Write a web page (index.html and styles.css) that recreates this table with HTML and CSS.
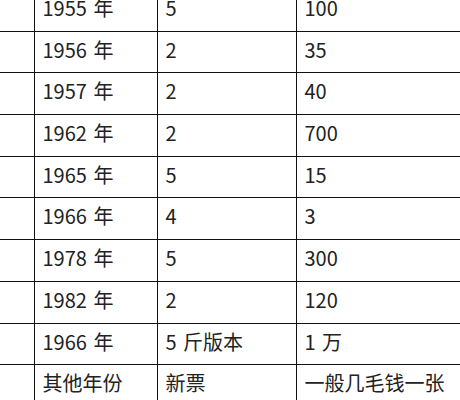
FILE: index.html
```html
<!DOCTYPE html>
<html lang="zh-CN">
<head>
<meta charset="utf-8">
<title>票价表</title>
<link rel="stylesheet" href="styles.css">
</head>
<body>
<table class="price-table">
  <colgroup>
    <col class="c-a">
    <col class="c-b">
    <col class="c-c">
    <col class="c-d">
  </colgroup>
  <tbody>
    <tr><td></td><td>1955 年</td><td>5</td><td>100</td></tr>
    <tr><td></td><td>1956 年</td><td>2</td><td>35</td></tr>
    <tr><td></td><td>1957 年</td><td>2</td><td>40</td></tr>
    <tr><td></td><td>1962 年</td><td>2</td><td>700</td></tr>
    <tr><td></td><td>1965 年</td><td>5</td><td>15</td></tr>
    <tr><td></td><td>1966 年</td><td>4</td><td>3</td></tr>
    <tr><td></td><td>1978 年</td><td>5</td><td>300</td></tr>
    <tr><td></td><td>1982 年</td><td>2</td><td>120</td></tr>
    <tr><td></td><td>1966 年</td><td>5 斤版本</td><td>1 万</td></tr>
    <tr><td></td><td>其他年份</td><td>新票</td><td>一般几毛钱一张</td></tr>
  </tbody>
</table>
</body>
</html>
```

FILE: styles.css
```css
html, body {
  margin: 0;
  padding: 0;
  background: #ffffff;
}

body {
  width: 460px;
  height: 400px;
  overflow: hidden;
}

.price-table {
  border-collapse: collapse;
  table-layout: fixed;
  width: 560px;
  margin-top: -11px;
  font-family: "Noto Sans CJK SC", "Open Sans", sans-serif;
  font-size: 20px;
  line-height: 24px;
  word-spacing: 2px;
  color: #222222;
}

.c-a { width: 34px; }
.c-b { width: 123px; }
.c-c { width: 139px; }
.c-d { width: 264px; }

.price-table td {
  height: 41.7px;
  box-sizing: border-box;
  padding: 6px 8px 0 8px;
  vertical-align: top;
  border: 1px solid #111111;
  white-space: nowrap;
  overflow: hidden;
}

.price-table tr td:first-child {
  border-left: none;
}

.price-table tr td:last-child {
  border-right: none;
}
```
